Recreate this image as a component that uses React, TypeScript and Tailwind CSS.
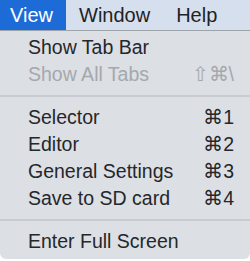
import React from 'react';

type Item = { label: string; keys?: string; disabled?: boolean } | 'sep';

const items: Item[] = [
  { label: 'Show Tab Bar' },
  { label: 'Show All Tabs', keys: '⇧⌘\\', disabled: true },
  'sep',
  { label: 'Selector', keys: '⌘1' },
  { label: 'Editor', keys: '⌘2' },
  { label: 'General Settings', keys: '⌘3' },
  { label: 'Save to SD card', keys: '⌘4' },
  'sep',
  { label: 'Enter Full Screen' },
];

export default function App() {
  return (
    <div className="w-[250px] h-[261px] bg-white font-['Liberation_Sans',Arial,sans-serif] overflow-hidden">
      <div className="flex h-[31px] bg-[#d6dfee] border-b border-[#9ea3aa] text-[20px] text-[#1f2226] leading-none">
        <div className="flex items-center pl-[10px] pr-[13px] bg-[#1d6bd6] text-white">View</div>
        <div className="flex items-center px-[13px]">Window</div>
        <div className="flex items-center px-[13px]">Help</div>
      </div>
      <div className="w-[250px] h-[228px] bg-[#dcdfe4] rounded-b-[6px] pt-[3px] text-[19.5px] leading-none">
        {items.map((it, i) =>
          it === 'sep' ? (
            <div key={i} className="h-[16px] flex items-center">
              <div className="w-full h-[2px] bg-[#c8cbd0]" />
            </div>
          ) : (
            <div
              key={i}
              className={`h-[27px] flex items-center justify-between pl-[28px] pr-[16px] ${
                it.disabled ? 'text-[#a5a8ad]' : 'text-[#25272b]'
              }`}
            >
              <span>{it.label}</span>
              {it.keys && <span>{it.keys}</span>}
            </div>
          )
        )}
      </div>
    </div>
  );
}
